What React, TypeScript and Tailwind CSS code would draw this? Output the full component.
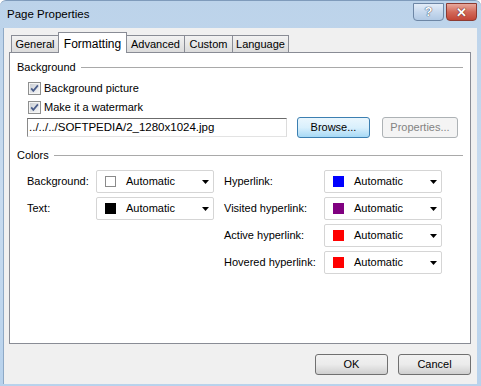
import React from 'react'

const font = "font-['Liberation_Sans',Arial,sans-serif]"

function CheckBox({ id }: { id: string }) {
  return (
    <svg width="13" height="13" viewBox="0 0 13 13" className="shrink-0">
      <defs>
        <linearGradient id={id} x1="0" y1="0" x2="1" y2="1">
          <stop offset="0" stopColor="#cbcfd5" />
          <stop offset="1" stopColor="#f6f6f6" />
        </linearGradient>
      </defs>
      <rect x="0.5" y="0.5" width="12" height="12" fill="#f4f4f4" stroke="#8e8f8f" />
      <rect x="2" y="2" width="9" height="9" fill={`url(#${id})`} />
      <path d="M3.2 6.4 L5.3 8.9 L9.9 3.4" stroke="#4a5d8a" strokeWidth="1.7" fill="none" />
    </svg>
  )
}

function SectionHeader({ label }: { label: string }) {
  return (
    <div className="flex items-center h-[14px]">
      <span>{label}</span>
      <div className="flex-1 h-px bg-[#a9a9a9] ml-[5px]" />
    </div>
  )
}

function WinButton({
  label,
  w,
  variant = 'normal',
}: {
  label: string
  w: string
  variant?: 'normal' | 'focused' | 'disabled'
}) {
  const cls =
    variant === 'focused'
      ? 'border-[#3c7fb1] bg-gradient-to-b from-[#eaf6fd] via-[#d9f0fc] to-[#a7d9f5] text-black'
      : variant === 'disabled'
        ? 'border-[#adb2b5] bg-[#f4f4f4] text-[#838383]'
        : 'border-[#707070] bg-gradient-to-b from-[#f2f2f2] via-[#ebebeb] to-[#cfcfcf] text-black'
  return (
    <div
      className={`${w} h-[21px] shrink-0 rounded-[3px] border flex items-center justify-center ${cls}`}
    >
      {label}
    </div>
  )
}

function ColorSelect({ color, bordered }: { color: string; bordered?: boolean }) {
  return (
    <div className="w-[118px] h-[23px] shrink-0 rounded-[2px] border border-[#d5d5d5] bg-white flex items-center">
      <div
        className={`w-[11px] h-[11px] ml-[8px] border ${bordered ? 'border-[#8a8a8a]' : ''}`}
        style={{ backgroundColor: color, borderColor: bordered ? undefined : color }}
      />
      <span className="ml-[10px] flex-1">Automatic</span>
      <svg width="7" height="4" viewBox="0 0 7 4" className="mr-[4px]">
        <polygon points="0,0 7,0 3.5,4" fill="#000" />
      </svg>
    </div>
  )
}

const leftRows = [
  { label: 'Background:', color: '#ffffff', bordered: true },
  { label: 'Text:', color: '#000000' },
]

const rightRows = [
  { label: 'Hyperlink:', color: '#0000ff' },
  { label: 'Visited hyperlink:', color: '#800080' },
  { label: 'Active hyperlink:', color: '#ff0000' },
  { label: 'Hovered hyperlink:', color: '#ff0000' },
]

const tabs = [
  { name: 'General', w: 'w-[48px]' },
  { name: 'Formatting', w: 'w-[69px]', active: true },
  { name: 'Advanced', w: 'w-[59px]' },
  { name: 'Custom', w: 'w-[49px]' },
  { name: 'Language', w: 'w-[57px]' },
]

export default function App() {
  return (
    <div className={`w-[481px] h-[386px] bg-white text-[11px] text-black ${font}`}>
      <div className="w-full h-full flex flex-col rounded-t-[6px] border-t border-[#7f9bbb] bg-gradient-to-b from-[#bcd3ea] via-[#c8dbef] to-[#b8d2ec] relative">
        {/* title bar */}
        <div className="h-[27px] flex items-start pl-[7px] pr-[4px] shrink-0">
          <span className="self-center text-[11.5px] mt-[1px]">Page Properties</span>
          <div className="ml-auto flex mt-[2px] gap-[2px]">
            <div className="w-[31px] h-[18px] rounded-b-[4px] border border-[#6d86a5] bg-gradient-to-b from-[#e3edf8] via-[#c7d9ee] to-[#b1c9e4] flex items-center justify-center">
              <span className="text-white font-bold text-[13px] [text-shadow:0_0_1px_#2b3f58,0_0_1px_#2b3f58]">?</span>
            </div>
            <div className="w-[31px] h-[18px] rounded-b-[4px] border border-[#8c3a31] bg-gradient-to-b from-[#e7a89c] via-[#d2695a] to-[#c24536] flex items-center justify-center">
              <span className="text-white font-bold text-[13px] leading-none [text-shadow:0_0_1px_#5a1d16,0_0_1px_#5a1d16]">✕</span>
            </div>
          </div>
        </div>

        {/* client area */}
        <div className="flex-1 ml-[3px] mr-[4px] mb-[2px] bg-[#f0f0f0] border-l border-[#8ea9c6] flex flex-col pt-[4px] px-[5px]">
          {/* tabs */}
          <div className="flex items-end ml-[2px] relative z-10">
            {tabs.map((t, i) =>
              t.active ? (
                <div
                  key={t.name}
                  className={`${t.w} h-[21px] -mb-px -ml-px bg-white border border-b-0 border-[#898c95] flex items-start justify-center pt-[2px] text-[12px]`}
                >
                  {t.name}
                </div>
              ) : (
                <div
                  key={t.name}
                  className={`${t.w} h-[17px] ${i > 0 ? '-ml-px' : ''} border border-b-0 border-[#898c95] bg-gradient-to-b from-[#f2f2f2] to-[#dcdcdc] flex items-center justify-center pt-[1px]`}
                >
                  {t.name}
                </div>
              ),
            )}
          </div>

          {/* panel */}
          <div className="w-[462px] h-[292px] border border-[#898c95] bg-white pl-[7px] pr-[7px] pt-[7px]">
            <SectionHeader label="Background" />

            <div className="ml-[11px] mt-[8px] flex items-center h-[13px] gap-[3px]">
              <CheckBox id="cb1" />
              <span>Background picture</span>
            </div>
            <div className="ml-[11px] mt-[6px] flex items-center h-[13px] gap-[3px]">
              <CheckBox id="cb2" />
              <span>Make it a watermark</span>
            </div>

            <div className="ml-[10px] mt-[3px] flex items-center h-[21px]">
              <div className="w-[260px] h-[19px] border border-t-[#6b6b6b] border-l-[#8a8a8a] border-r-[#dcdcdc] border-b-[#e3e3e3] bg-white flex items-center pl-[1px] text-[11.5px]">
                ../../../SOFTPEDIA/2_1280x1024.jpg
              </div>
              <div className="ml-[10px]">
                <WinButton label="Browse..." w="w-[73px]" variant="focused" />
              </div>
              <div className="ml-[12px]">
                <WinButton label="Properties..." w="w-[76px]" variant="disabled" />
              </div>
            </div>

            <div className="mt-[10px]">
              <SectionHeader label="Colors" />
            </div>

            <div className="ml-[10px] mt-[8px] flex">
              <div className="flex flex-col gap-[4px]">
                {leftRows.map(r => (
                  <div key={r.label} className="flex items-center">
                    <span className="w-[69px]">{r.label}</span>
                    <ColorSelect color={r.color} bordered={r.bordered} />
                  </div>
                ))}
              </div>
              <div className="ml-[10px] flex flex-col gap-[4px]">
                {rightRows.map(r => (
                  <div key={r.label} className="flex items-center">
                    <span className="w-[100px]">{r.label}</span>
                    <ColorSelect color={r.color} />
                  </div>
                ))}
              </div>
            </div>
          </div>

          {/* footer buttons */}
          <div className="flex justify-end gap-[10px] mt-[10px] pr-[1px]">
            <WinButton label="OK" w="w-[73px]" />
            <WinButton label="Cancel" w="w-[73px]" />
          </div>
        </div>
      </div>
    </div>
  )
}
